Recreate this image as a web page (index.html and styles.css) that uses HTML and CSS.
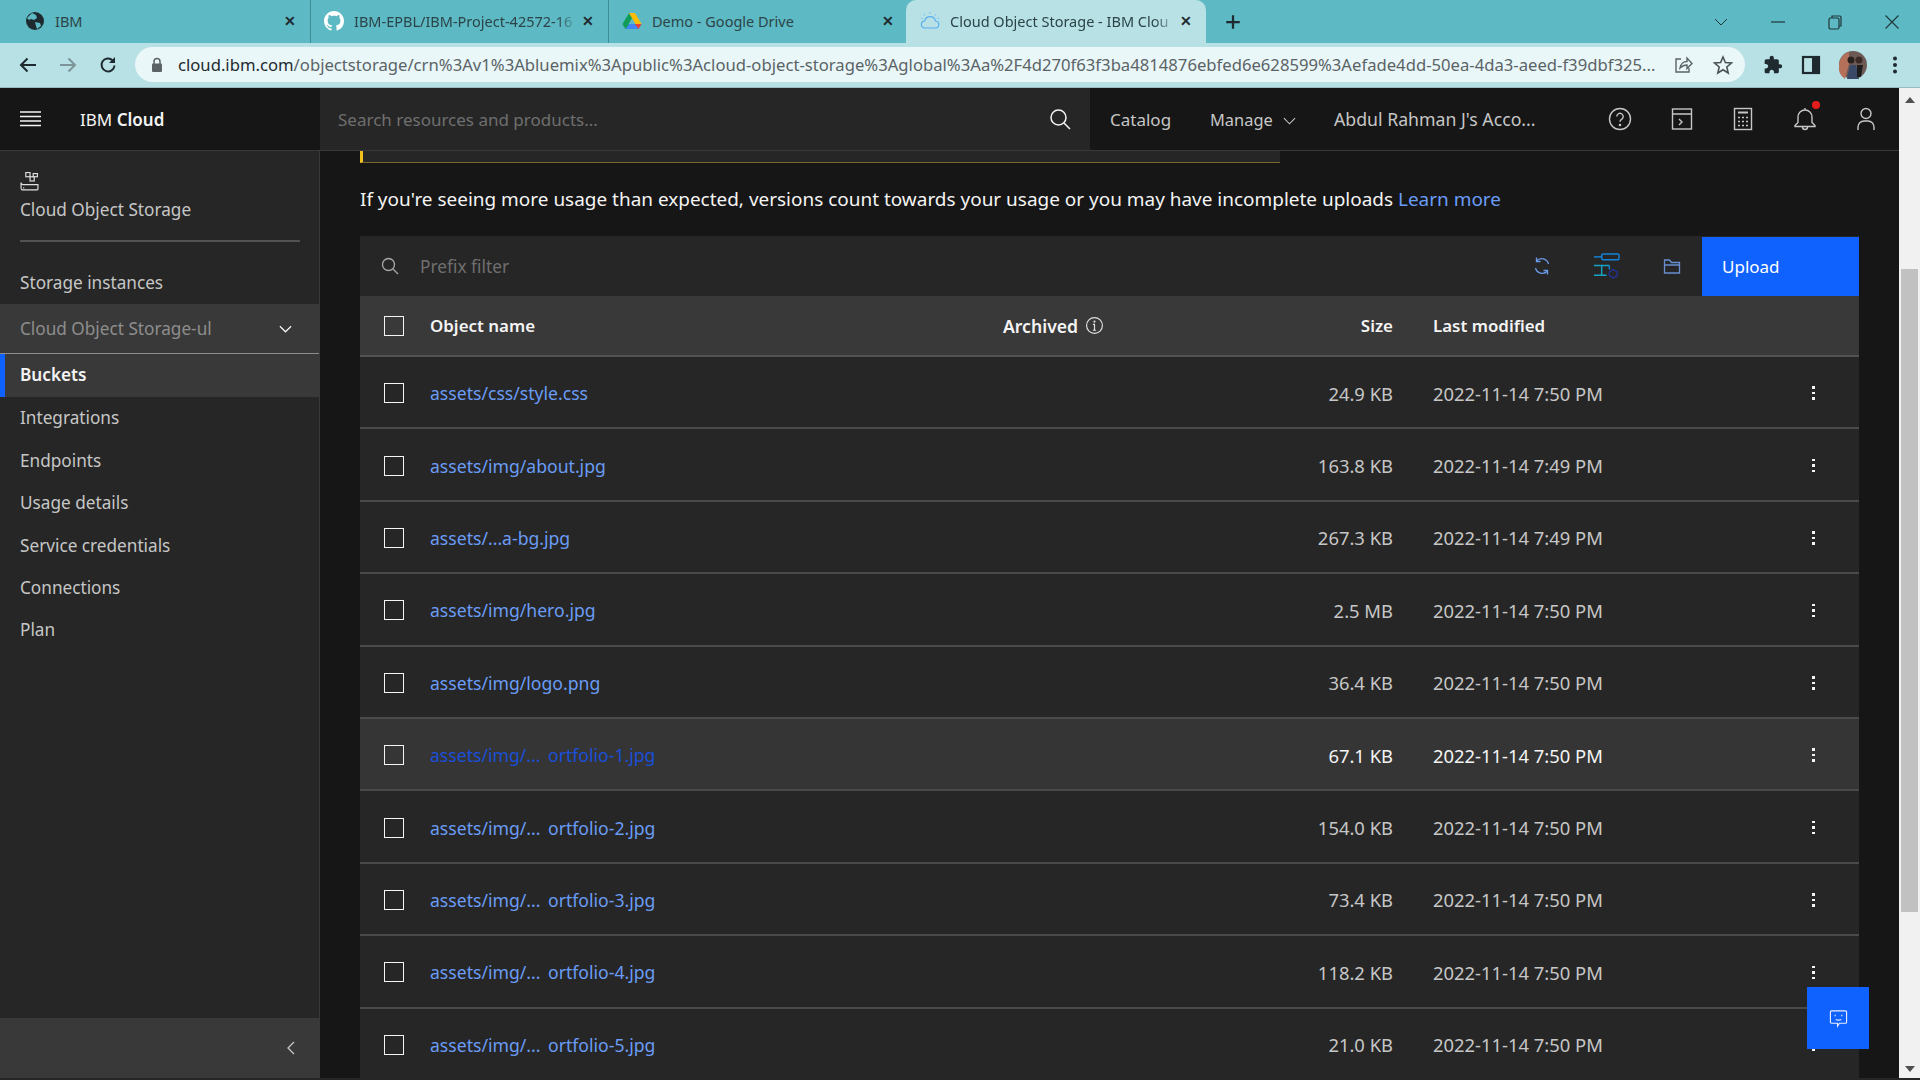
FILE: index.html
```html
<!DOCTYPE html>
<html lang="en">
<head>
  <meta charset="UTF-8">
  <title>Cloud Object Storage - IBM Cloud</title>
  <link rel="stylesheet" href="styles.css">
</head>
<body>

  <div class="tabstrip">
    <div class="tab tab-first">
      <svg class="favicon" viewBox="0 0 20 20"><circle cx="10" cy="10" r="9" fill="#1f2a30"/><path d="M7 2l4 2 1 3-3 2-3-1-2 1-2-2zM10 11l5 1 1 3-4 3-1-3z" fill="#5db9c3"/></svg>
      <span class="tab-title">IBM</span>
      <span class="tab-close">✕</span>
    </div>
    <div class="tab">
      <svg class="favicon" viewBox="0 0 16 16"><path fill="#fff" d="M8 0C3.58 0 0 3.58 0 8c0 3.54 2.29 6.53 5.47 7.59.4.07.55-.17.55-.38 0-.19-.01-.82-.01-1.49-2.01.37-2.53-.49-2.69-.94-.09-.23-.48-.94-.82-1.13-.28-.15-.68-.52-.01-.53.63-.01 1.08.58 1.23.82.72 1.21 1.87.87 2.33.66.07-.52.28-.87.51-1.07-1.78-.2-3.64-.89-3.64-3.95 0-.87.31-1.59.82-2.15-.08-.2-.36-1.02.08-2.12 0 0 .67-.21 2.2.82.64-.18 1.32-.27 2-.27.68 0 1.36.09 2 .27 1.53-1.04 2.2-.82 2.2-.82.44 1.1.16 1.92.08 2.12.51.56.82 1.27.82 2.15 0 3.07-1.87 3.75-3.65 3.95.29.25.54.73.54 1.48 0 1.07-.01 1.93-.01 2.2 0 .21.15.46.55.38A8.013 8.013 0 0016 8c0-4.42-3.58-8-8-8z"/></svg>
      <span class="tab-title tab-fade">IBM-EPBL/IBM-Project-42572-16</span>
      <span class="tab-close">✕</span>
    </div>
    <div class="tab tab-third">
      <svg class="favicon" viewBox="0 0 20 18"><path d="M7 1h6l-6.500 11H0.500z" fill="#0f9d58"/><path d="M7 1h6l6.500 11h-6z" fill="#fbbc04"/><path d="M0.500 12h19l-3 5H3.500z" fill="#4285f4"/><path d="M0.500 12h6.500L3.500 17z" fill="#0f9d58"/><path d="M13 12h6.500l-3 5z" fill="#ea4335"/></svg>
      <span class="tab-title">Demo - Google Drive</span>
      <span class="tab-close">✕</span>
    </div>
    <div class="tab tab-active">
      <svg class="favicon" viewBox="0 0 20 20" fill="none" stroke="#5aaef0" stroke-width="1.200"><path d="M5 17h10a3.500 3.500 0 0 0 .5-7 5.500 5.500 0 0 0-10.800 0A3.500 3.500 0 0 0 5 17z"/><path d="M10 1v2M4 3l1 1.500M16 3l-1 1.500M1 7l1.500.8M19 7l-1.500.8" stroke="#7ec6f5"/></svg>
      <span class="tab-title tab-fade">Cloud Object Storage - IBM Clou</span>
      <span class="tab-close">✕</span>
    </div>
    <svg class="tab-new" viewBox="0 0 16 16"><path d="M8 2v12M2 8h12" stroke="#1f2a30" stroke-width="2"/></svg>
    <div class="window-btns">
      <svg viewBox="0 0 16 16"><path d="M2 5l6 6 6-6" fill="none" stroke="#20363a" stroke-width="1"/></svg>
      <svg viewBox="0 0 16 16"><path d="M1 8h14" stroke="#20363a" stroke-width="1.200"/></svg>
      <svg viewBox="0 0 16 16" fill="none" stroke="#20363a" stroke-width="1.200"><rect x="2" y="4" width="10" height="11" rx="1.500"/><path d="M5 4V2h8a1 1 0 0 1 1 1v9h-2"/></svg>
      <svg viewBox="0 0 16 16"><path d="M1.500 1.500l13 13M14.500 1.500l-13 13" stroke="#20363a" stroke-width="1.100"/></svg>
    </div>
  </div>

  <div class="browserbar">
    <svg class="nav-btn" viewBox="0 0 20 20"><path d="M18 10H3M9.500 3.500L3 10l6.500 6.500" fill="none" stroke="#1f2a30" stroke-width="2"/></svg>
    <svg class="nav-btn" viewBox="0 0 20 20"><path d="M2 10h15M10.500 3.500L17 10l-6.500 6.500" fill="none" stroke="#7d9498" stroke-width="2"/></svg>
    <svg class="nav-btn" viewBox="0 0 20 20"><path d="M16.500 10.500a6.500 6.500 0 1 1-2-5.300" fill="none" stroke="#1f2a30" stroke-width="2"/><path d="M17 2v6h-6z" fill="#1f2a30"/></svg>
    <div class="urlbar">
      <svg class="lock" viewBox="0 0 12 16"><path d="M3 7V4.500a3 3 0 0 1 6 0V7" fill="none" stroke="#5b6366" stroke-width="1.500"/><rect x="1" y="6.500" width="10" height="8.500" rx="1" fill="#5b6366"/></svg>
      <span class="url"><b>cloud.ibm.com</b>/objectstorage/crn%3Av1%3Abluemix%3Apublic%3Acloud-object-storage%3Aglobal%3Aa%2F4d270f63f3ba4814876ebfed6e628599%3Aefade4dd-50ea-4da3-aeed-f39dbf325...</span>
      <svg class="url-icon" viewBox="0 0 20 20" fill="none" stroke="#5b6366" stroke-width="1.400"><path d="M8 4H3v13h13v-4"/><path d="M7 13c.5-4 3.500-6.500 7-6.500V3l5 5.500-5 5V10c-3 0-5 1-7 3z"/></svg>
      <svg class="url-icon" viewBox="0 0 20 20"><path d="M10 2l2.400 5.500 6 .5-4.600 4 1.400 6L10 14.800 4.800 18l1.400-6L1.600 8l6-.5z" fill="none" stroke="#4b5356" stroke-width="1.600"/></svg>
    </div>
    <div class="browser-tools">
      <svg viewBox="0 0 24 24"><path fill="#1f2a30" d="M20.500 11H19V7c0-1.100-.9-2-2-2h-4V3.500C13 2.120 11.880 1 10.500 1S8 2.120 8 3.500V5H4c-1.100 0-1.990.9-1.990 2v3.800H3.500c1.490 0 2.700 1.210 2.700 2.700s-1.210 2.700-2.700 2.700H2V20c0 1.100.9 2 2 2h3.800v-1.500c0-1.490 1.210-2.700 2.700-2.700 1.490 0 2.700 1.210 2.700 2.700V22H17c1.100 0 2-.9 2-2v-4h1.500c1.380 0 2.500-1.120 2.500-2.500S21.880 11 20.500 11z"/></svg>
      <svg viewBox="0 0 20 20"><rect x="2" y="2" width="16" height="16" fill="none" stroke="#1f2a30" stroke-width="2.200"/><rect x="11" y="2" width="7" height="16" fill="#1f2a30"/></svg>
      <svg class="avatar" viewBox="0 0 28 28"><circle cx="14" cy="14" r="14" fill="#6d5a55"/><path d="M0 14a14 14 0 0 1 10-13v12l-4 15A14 14 0 0 1 0 14z" fill="#b5705a"/><path d="M8 28l3-14h6l3 14z" fill="#3a4a66"/><circle cx="12" cy="9" r="3.500" fill="#2b2220"/><circle cx="20" cy="9" r="3.500" fill="#3b2a26"/><path d="M18 14h6l-2 12h-4z" fill="#1f1c1c"/></svg>
      <svg viewBox="0 0 20 20" fill="#1f2a30"><circle cx="10" cy="3.500" r="2"/><circle cx="10" cy="10" r="2"/><circle cx="10" cy="16.500" r="2"/></svg>
    </div>
  </div>

  <div class="viewport">
    <div class="app">

      <header class="topbar">
        <div class="brand">
          <svg class="hamburger" viewBox="0 0 21 16"><path d="M0 1h21M0 5.500h21M0 10h21M0 14.500h21" stroke="#f4f4f4" stroke-width="1.500"/></svg>
          <span class="brand-name">IBM <b>Cloud</b></span>
        </div>
        <div class="global-search">
          <span class="global-search-text">Search resources and products...</span>
          <svg class="icon-22" viewBox="0 0 22 22" fill="none" stroke="#f4f4f4" stroke-width="1.500"><circle cx="9.500" cy="9.500" r="7.500"/><path d="M15 15l6 6"/></svg>
        </div>
        <nav class="topnav">
          <span class="topnav-catalog">Catalog</span>
          <span class="topnav-manage">Manage <svg viewBox="0 0 14 8"><path d="M1 1l6 6 6-6" fill="none" stroke="#c6c6c6" stroke-width="1.200"/></svg></span>
          <span class="topnav-account">Abdul Rahman J's Acco...</span>
        </nav>
        <div class="topicons">
          <svg viewBox="0 0 24 24" fill="none" stroke="#c6c6c6" stroke-width="1.400"><circle cx="12" cy="12" r="10.500"/><path d="M8.800 9.500a3.200 3.200 0 1 1 4.800 2.800c-1 .6-1.600 1.100-1.600 2.400"/><circle cx="12" cy="18" r=".6"/></svg>
          <svg viewBox="0 0 24 24" fill="none" stroke="#c6c6c6" stroke-width="1.400"><rect x="2.500" y="2" width="19" height="20"/><path d="M2.500 7h19M9 12l3 3-3 3"/></svg>
          <svg viewBox="0 0 24 24" fill="none" stroke="#c6c6c6" stroke-width="1.400"><rect x="3.500" y="1.500" width="17" height="21"/><path d="M7 5.500h10" stroke-width="2"/><path d="M7 10.500h2M11 10.500h2M15 10.500h2M7 14.500h2M11 14.500h2M15 14.500h2M7 18.500h2M11 18.500h2M15 18.500h2"/></svg>
          <span class="bell">
            <svg viewBox="0 0 24 24" fill="none" stroke="#c6c6c6" stroke-width="1.400"><path d="M2 18.500l3-3V10a7 7 0 0 1 14 0v5.500l3 3v1H2zM12 1v2M9.500 20a2.500 2.500 0 0 0 5 0"/></svg>
            <i class="bell-dot"></i>
          </span>
          <svg viewBox="0 0 24 24" fill="none" stroke="#c6c6c6" stroke-width="1.400"><circle cx="12" cy="6.500" r="5"/><path d="M4 23v-3a6 6 0 0 1 6-6h4a6 6 0 0 1 6 6v3"/></svg>
        </div>
      </header>

      <div class="columns">
        <aside class="sidebar">
          <div class="side-head">
            <svg class="side-icon" viewBox="0 0 18 18" fill="none" stroke="#e0e0e0" stroke-width="1.100"><rect x="5.500" y=".5" width="4" height="4"/><rect x="9.500" y="4.500" width="4" height="4"/><rect x="12.500" y="1.500" width="4" height="3"/><path d="M1 10v5a2 2 0 0 0 1 2h14a1 1 0 0 0 1-1v-4H3a2 2 0 0 1-2-2zM3 15h1"/></svg>
            <div class="side-title">Cloud Object Storage</div>
          </div>
          <div class="side-link side-first">Storage instances</div>
          <div class="side-group">
            <span>Cloud Object Storage-ul</span>
            <svg viewBox="0 0 14 8"><path d="M1 1l6 6 6-6" fill="none" stroke="#f4f4f4" stroke-width="1.300"/></svg>
          </div>
          <div class="side-active">Buckets</div>
          <div class="side-link">Integrations</div>
          <div class="side-link">Endpoints</div>
          <div class="side-link">Usage details</div>
          <div class="side-link">Service credentials</div>
          <div class="side-link">Connections</div>
          <div class="side-link">Plan</div>
          <div class="side-foot">
            <svg viewBox="0 0 8 14"><path d="M7 1L1 7l6 6" fill="none" stroke="#c6c6c6" stroke-width="1.300"/></svg>
          </div>
        </aside>

        <main class="main">
          <div class="banner"></div>
          <p class="usage-note">If you're seeing more usage than expected, versions count towards your usage or you may have incomplete uploads <a>Learn more</a></p>

          <div class="toolbar">
            <svg class="filter-icon" viewBox="0 0 18 18" fill="none" stroke="#a8a8a8" stroke-width="1.300"><circle cx="7.500" cy="7.500" r="6"/><path d="M12 12l5 5"/></svg>
            <span class="filter-text">Prefix filter</span>
            <svg class="tool-sync" viewBox="0 0 18 18" fill="none" stroke="#6a9be8" stroke-width="1.300"><path d="M15.500 7A7 7 0 0 0 3.500 4M2.500 11A7 7 0 0 0 14.500 14"/><path d="M3.500 .5V4.500h4M14.500 17.500V13.500h-4"/></svg>
            <svg class="tool-tree" viewBox="0 0 28 28" fill="none" stroke-width="1.500"><rect x="9" y="1" width="18" height="6" rx="1.500" stroke="#1283d8"/><path d="M1 4h8" stroke="#1283d8"/><path d="M17 13H9v10h5M1 13h8M1 23h8" stroke="#16a3c4"/><path d="M17 13v4" stroke="#1283d8"/><path d="M21 17l4 2.500v4L21 26l-4-2.500v-4z" stroke="#22318f"/></svg>
            <svg class="tool-folder" viewBox="0 0 18 18" fill="none" stroke="#6a8fd0" stroke-width="1.300"><path d="M1.500 16V3h5l2 2.500h8V16zM1.500 8h15"/></svg>
            <button class="upload">Upload</button>
          </div>

          <div class="row row-head">
            <span class="check"></span>
            <span class="cell-name">Object name</span>
            <span class="cell-archived">Archived <svg viewBox="0 0 18 18" fill="none" stroke="#e0e0e0" stroke-width="1.100"><circle cx="9" cy="9" r="7.500"/><path d="M7.500 13.500h3M9 13V8H7.500"/><circle cx="9" cy="5.300" r=".5"/></svg></span>
            <span class="cell-size">Size</span>
            <span class="cell-date">Last modified</span>
          </div>

          <div class="row">
            <span class="check"></span><a class="cell-name">assets/css/style.css</a><span class="cell-archived"></span>
            <span class="cell-size">24.9 KB</span><span class="cell-date">2022-11-14 7:50 PM</span><span class="kebab"><i></i><i></i><i></i></span>
          </div>
          <div class="row">
            <span class="check"></span><a class="cell-name">assets/img/about.jpg</a><span class="cell-archived"></span>
            <span class="cell-size">163.8 KB</span><span class="cell-date">2022-11-14 7:49 PM</span><span class="kebab"><i></i><i></i><i></i></span>
          </div>
          <div class="row">
            <span class="check"></span><a class="cell-name">assets/...a-bg.jpg</a><span class="cell-archived"></span>
            <span class="cell-size">267.3 KB</span><span class="cell-date">2022-11-14 7:49 PM</span><span class="kebab"><i></i><i></i><i></i></span>
          </div>
          <div class="row">
            <span class="check"></span><a class="cell-name">assets/img/hero.jpg</a><span class="cell-archived"></span>
            <span class="cell-size">2.5 MB</span><span class="cell-date">2022-11-14 7:50 PM</span><span class="kebab"><i></i><i></i><i></i></span>
          </div>
          <div class="row">
            <span class="check"></span><a class="cell-name">assets/img/logo.png</a><span class="cell-archived"></span>
            <span class="cell-size">36.4 KB</span><span class="cell-date">2022-11-14 7:50 PM</span><span class="kebab"><i></i><i></i><i></i></span>
          </div>
          <div class="row row-hover">
            <span class="check"></span><a class="cell-name">assets/img/... ortfolio-1.jpg</a><span class="cell-archived"></span>
            <span class="cell-size">67.1 KB</span><span class="cell-date">2022-11-14 7:50 PM</span><span class="kebab"><i></i><i></i><i></i></span>
          </div>
          <div class="row">
            <span class="check"></span><a class="cell-name">assets/img/... ortfolio-2.jpg</a><span class="cell-archived"></span>
            <span class="cell-size">154.0 KB</span><span class="cell-date">2022-11-14 7:50 PM</span><span class="kebab"><i></i><i></i><i></i></span>
          </div>
          <div class="row">
            <span class="check"></span><a class="cell-name">assets/img/... ortfolio-3.jpg</a><span class="cell-archived"></span>
            <span class="cell-size">73.4 KB</span><span class="cell-date">2022-11-14 7:50 PM</span><span class="kebab"><i></i><i></i><i></i></span>
          </div>
          <div class="row">
            <span class="check"></span><a class="cell-name">assets/img/... ortfolio-4.jpg</a><span class="cell-archived"></span>
            <span class="cell-size">118.2 KB</span><span class="cell-date">2022-11-14 7:50 PM</span><span class="kebab"><i></i><i></i><i></i></span>
          </div>
          <div class="row">
            <span class="check"></span><a class="cell-name">assets/img/... ortfolio-5.jpg</a><span class="cell-archived"></span>
            <span class="cell-size">21.0 KB</span><span class="cell-date">2022-11-14 7:50 PM</span><span class="kebab"><i></i><i></i><i></i></span>
          </div>

          <button class="feedback">
            <svg viewBox="0 0 20 20" fill="none" stroke="#e8eefc" stroke-width="1.200"><path d="M2.500 2h15a1 1 0 0 1 1 1v11a1 1 0 0 1-1 1H11l-2 3v-3H2.500a1 1 0 0 1-1-1V3a1 1 0 0 1 1-1z"/><path d="M6.500 6v1.500M13.500 6v1.500M7 11c2 1 4 1 6 0"/></svg>
          </button>
        </main>
      </div>
    </div>

    <div class="scrollbar">
      <div class="scroll-up"></div>
      <div class="scroll-thumb"></div>
      <div class="scroll-down"></div>
    </div>
  </div>

</body>
</html>
```

FILE: styles.css
```css
* {
  box-sizing: border-box;
}

html, body {
  height: 1080px;
  margin: 0;
  overflow: hidden;
}

body {
  background-color: #262626;
  font-family: "Noto Sans", Arial, sans-serif;
  font-size: 17.200px;
  color: #e0e0e0;
}

/* browser chrome */

.tabstrip {
  display: flex;
  align-items: center;
  height: 43px;
  padding-left: 8px;
  background-color: #5db9c3;
  color: #20363a;
  font-size: 14.500px;
}

.tab {
  display: flex;
  align-items: center;
  width: 298px;
  height: 43px;
  padding: 0 11px 2px 13px;
  border-right: 1px solid #3f8c95;
}

.tab-first {
  width: 303px;
  padding-left: 17px;
}

.tab-third {
  width: 297px;
  padding-right: 9px;
  border-right: none;
}

.tab-active {
  width: 300px;
  padding-left: 14px;
  border-right: none;
  border-radius: 10px 10px 0 0;
  background-color: #b7e1e5;
}

.favicon {
  width: 20px;
  height: 20px;
  flex-shrink: 0;
}

.tab-title {
  flex: 1;
  margin-left: 10px;
  white-space: nowrap;
  color: #2c4448;
}

.tab-fade {
  -webkit-mask-image: linear-gradient(to right, #000 90%, transparent);
  mask-image: linear-gradient(to right, #000 90%, transparent);
}

.tab-close {
  width: 18px;
  font-size: 14px;
  font-weight: bold;
  text-align: center;
  color: #1f2a30;
}

.tab-new {
  width: 18px;
  height: 18px;
  margin-left: 18px;
}

.window-btns {
  display: flex;
  align-items: center;
  gap: 41px;
  margin-left: auto;
  padding-right: 20px;
}

.window-btns svg {
  width: 16px;
  height: 16px;
}

.browserbar {
  display: flex;
  align-items: center;
  height: 45px;
  padding-left: 18px;
  background-color: #b7e1e5;
  border-bottom: 1px solid #98bcc0;
}

.nav-btn {
  width: 20px;
  height: 20px;
  margin-right: 20px;
}

.urlbar {
  display: flex;
  align-items: center;
  width: 1610px;
  height: 35px;
  margin-left: -3px;
  margin-bottom: 1px;
  padding-left: 16px;
  border-radius: 18px;
  background-color: #e9f7f8;
}

.lock {
  width: 12px;
  height: 16px;
  margin-right: 15px;
}

.url {
  width: 1495px;
  flex-shrink: 0;
  white-space: nowrap;
  font-size: 16.670px;
  color: #5b6366;
}

.url b {
  font-weight: normal;
  color: #1f2a30;
}

.url-icon {
  width: 20px;
  height: 20px;
  flex-shrink: 0;
}

.url-icon:last-child {
  margin-left: 20px;
}

.browser-tools {
  display: flex;
  align-items: center;
  gap: 18px;
  margin-left: 18px;
}

.browser-tools svg {
  width: 20px;
  height: 20px;
}

.browser-tools .avatar {
  width: 28px;
  height: 30px;
}

/* page */

.viewport {
  display: flex;
  height: 990px;
}

.app {
  flex: 1;
  display: flex;
  flex-direction: column;
  min-width: 0;
  background-color: #161616;
}

.topbar {
  display: flex;
  height: 63px;
  flex-shrink: 0;
  border-bottom: 1px solid #393939;
  background-color: #161616;
}

.brand {
  display: flex;
  align-items: center;
  width: 320px;
  padding-left: 20px;
}

.hamburger {
  width: 21px;
  height: 16px;
  margin-right: 39px;
}

.brand-name {
  font-size: 17px;
  color: #f4f4f4;
}

.brand-name b {
  font-weight: 600;
}

.global-search {
  display: flex;
  align-items: center;
  justify-content: space-between;
  width: 770px;
  padding: 0 19px 0 18px;
  background-color: #262626;
  font-size: 17px;
  color: #6f6f6f;
}

.icon-22 {
  width: 22px;
  height: 22px;
}

.topnav {
  display: flex;
  align-items: center;
  width: 500px;
  font-size: 17px;
  color: #c6c6c6;
}

.topnav-catalog {
  margin-left: 20px;
  width: 100px;
}

.topnav-manage {
  width: 124px;
  font-size: 16.400px;
}

.topnav-manage svg {
  width: 13px;
  height: 8px;
  margin-left: 6px;
  vertical-align: middle;
}

.topnav-account {
  font-size: 17.700px;
}

.topicons {
  display: flex;
  align-items: center;
  gap: 37.500px;
  margin-left: 18px;
}

.topicons svg {
  display: block;
  width: 24px;
  height: 24px;
}

.bell {
  position: relative;
}

.bell-dot {
  position: absolute;
  top: -6px;
  right: -3px;
  width: 8px;
  height: 8px;
  border-radius: 50%;
  background-color: #e51c1c;
}

.columns {
  flex: 1;
  display: flex;
  min-height: 0;
}

.sidebar {
  display: flex;
  flex-direction: column;
  width: 320px;
  flex-shrink: 0;
  border-right: 1px solid #393939;
  background-color: #262626;
  color: #c6c6c6;
}

.side-head {
  height: 91px;
  margin: 0 19px 0 20px;
  padding-top: 21px;
  border-bottom: 2px solid #525252;
}

.side-icon {
  display: block;
  width: 19px;
  height: 19px;
}

.side-title {
  margin-top: 6px;
  line-height: 26px;
}

.side-link {
  height: 42.400px;
  padding-left: 20px;
  line-height: 42.400px;
}

.side-first {
  margin-top: 20px;
}

.side-group {
  display: flex;
  align-items: center;
  justify-content: space-between;
  height: 50px;
  padding: 0 27px 0 20px;
  border-bottom: 1px solid #8d8d8d;
  background-color: #393939;
  color: #8d8d8d;
}

.side-group svg {
  width: 13px;
  height: 8px;
}

.side-active {
  height: 43px;
  padding-left: 15px;
  border-left: 5px solid #0f62fe;
  background-color: #393939;
  font-weight: 600;
  line-height: 42px;
  color: #f4f4f4;
}

.side-foot {
  display: flex;
  align-items: center;
  justify-content: flex-end;
  height: 60px;
  margin-top: auto;
  padding-right: 24px;
  background-color: #393939;
}

.side-foot svg {
  width: 8px;
  height: 14px;
}

.main {
  position: relative;
  flex: 1;
  min-width: 0;
  padding: 0 40px;
  overflow: hidden;
}

.banner {
  width: 920px;
  height: 12px;
  border-left: 3px solid #f1c21b;
  border-bottom: 1px solid #7a6a2a;
  background-color: #262626;
}

.usage-note {
  height: 73px;
  margin: 0;
  padding-top: 23px;
  white-space: nowrap;
  font-size: 18.970px;
  line-height: 26px;
  color: #f4f4f4;
}

.usage-note a {
  color: #6a9cf5;
}

.toolbar {
  display: flex;
  align-items: center;
  height: 60px;
  padding-left: 21px;
  background-color: #262626;
}

.filter-icon {
  width: 18px;
  height: 18px;
}

.filter-text {
  margin-left: 21px;
  font-size: 17.300px;
  color: #6f6f6f;
}

.tool-sync {
  width: 18px;
  height: 18px;
  margin-left: auto;
}

.tool-tree {
  width: 27px;
  height: 27px;
  margin-left: 42px;
}

.tool-folder {
  width: 18px;
  height: 18px;
  margin-left: 43px;
}

.upload {
  width: 157px;
  height: 59px;
  margin-left: 21px;
  padding-left: 20px;
  border: none;
  background-color: #0f62fe;
  font: inherit;
  font-size: 17px;
  text-align: left;
  color: #fff;
}

.row {
  display: flex;
  align-items: center;
  height: 72.400px;
  padding-top: 2px;
  border-bottom: 2px solid #4a4a4a;
  background-color: #262626;
  font-size: 18.400px;
  color: #c6c6c6;
}

.row-head {
  height: 61px;
  padding-top: 0;
  border-bottom: 2px solid #525252;
  background-color: #393939;
  font-size: 16.900px;
  font-weight: 600;
  color: #f4f4f4;
}

.row-hover {
  background-color: #353535;
  color: #f4f4f4;
}

.check {
  width: 20px;
  height: 20px;
  margin-left: 24px;
  flex-shrink: 0;
  border: 1.500px solid #f4f4f4;
}

.cell-name {
  width: 573px;
  margin-left: 26px;
  flex-shrink: 0;
}

a.cell-name {
  font-size: 17.600px;
  word-spacing: 3px;
  color: #6a9cf5;
}

.row-hover a.cell-name {
  color: #1a4fd8;
}

.cell-archived {
  display: flex;
  align-items: center;
  gap: 7px;
  width: 200px;
  flex-shrink: 0;
  font-size: 17.600px;
}

.cell-archived svg {
  width: 19px;
  height: 19px;
}

.cell-size {
  width: 190px;
  flex-shrink: 0;
  text-align: right;
}

.cell-date {
  width: 300px;
  margin-left: 40px;
  flex-shrink: 0;
}

.kebab {
  display: flex;
  flex-direction: column;
  gap: 3px;
  margin-left: 79px;
}

.kebab i {
  width: 2.500px;
  height: 2.500px;
  background-color: #f4f4f4;
}

.feedback {
  position: absolute;
  top: 836px;
  left: 1487px;
  width: 62px;
  height: 62px;
  padding: 0;
  border: none;
  background-color: #0f62fe;
}

.feedback svg {
  width: 19px;
  height: 19px;
  vertical-align: middle;
}

/* page scrollbar */

.scrollbar {
  display: flex;
  flex-direction: column;
  width: 21px;
  flex-shrink: 0;
  padding: 0 2px;
  background-color: #f1f1f1;
}

.scroll-up {
  width: 0;
  height: 0;
  margin: 9px auto 0;
  border-left: 5px solid transparent;
  border-right: 5px solid transparent;
  border-bottom: 6px solid #505050;
}

.scroll-thumb {
  height: 643px;
  margin-top: 166px;
  background-color: #c1c1c1;
}

.scroll-down {
  width: 0;
  height: 0;
  margin: auto auto 6px;
  border-left: 5px solid transparent;
  border-right: 5px solid transparent;
  border-top: 6px solid #505050;
}
```
